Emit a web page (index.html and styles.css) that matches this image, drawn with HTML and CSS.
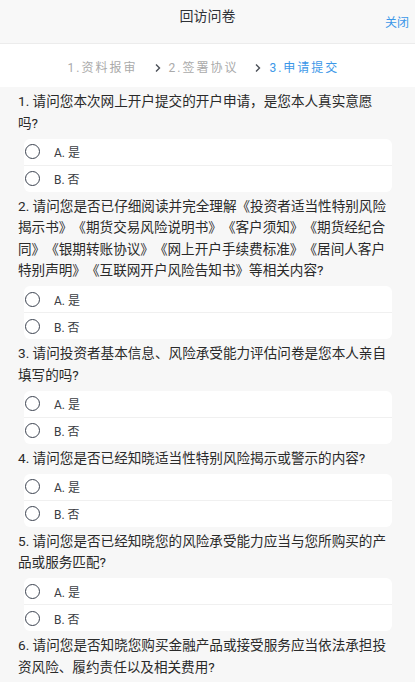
FILE: index.html
```html
<!DOCTYPE html>
<html lang="zh-CN">
<head>
<meta charset="utf-8">
<title>回访问卷</title>
<link rel="stylesheet" href="styles.css">
</head>
<body>
<header class="topbar">
  <h1 class="title">回访问卷</h1>
  <span class="close">关闭</span>
</header>
<nav class="steps">
  <span class="step">1.资料报审</span>
  <svg class="chev" width="6" height="10" viewBox="0 0 6 10"><polyline points="1,1.5 4.5,5 1,8.5" fill="none" stroke="#4a4f57" stroke-width="1.4"/></svg>
  <span class="step">2.签署协议</span>
  <svg class="chev" width="6" height="10" viewBox="0 0 6 10"><polyline points="1,1.5 4.5,5 1,8.5" fill="none" stroke="#4a4f57" stroke-width="1.4"/></svg>
  <span class="step active">3.申请提交</span>
</nav>
<main class="list">
  <section class="q">
    <p class="q-text">1. 请问您本次网上开户提交的开户申请，是您本人真实意愿吗?</p>
    <div class="opts">
      <label class="opt"><span class="radio"></span><span>A. 是</span></label>
      <label class="opt"><span class="radio"></span><span>B. 否</span></label>
    </div>
  </section>
  <section class="q">
    <p class="q-text">2. 请问您是否已仔细阅读并完全理解《投资者适当性特别风险揭示书》《期货交易风险说明书》《客户须知》《期货经纪合同》《银期转账协议》《网上开户手续费标准》《居间人客户特别声明》《互联网开户风险告知书》等相关内容?</p>
    <div class="opts">
      <label class="opt"><span class="radio"></span><span>A. 是</span></label>
      <label class="opt"><span class="radio"></span><span>B. 否</span></label>
    </div>
  </section>
  <section class="q">
    <p class="q-text">3. 请问投资者基本信息、风险承受能力评估问卷是您本人亲自填写的吗?</p>
    <div class="opts">
      <label class="opt"><span class="radio"></span><span>A. 是</span></label>
      <label class="opt"><span class="radio"></span><span>B. 否</span></label>
    </div>
  </section>
  <section class="q">
    <p class="q-text">4. 请问您是否已经知晓适当性特别风险揭示或警示的内容?</p>
    <div class="opts">
      <label class="opt"><span class="radio"></span><span>A. 是</span></label>
      <label class="opt"><span class="radio"></span><span>B. 否</span></label>
    </div>
  </section>
  <section class="q">
    <p class="q-text">5. 请问您是否已经知晓您的风险承受能力应当与您所购买的产品或服务匹配?</p>
    <div class="opts">
      <label class="opt"><span class="radio"></span><span>A. 是</span></label>
      <label class="opt"><span class="radio"></span><span>B. 否</span></label>
    </div>
  </section>
  <section class="q">
    <p class="q-text">6. 请问您是否知晓您购买金融产品或接受服务应当依法承担投资风险、履约责任以及相关费用?</p>
    <div class="opts">
      <label class="opt"><span class="radio"></span><span>A. 是</span></label>
      <label class="opt"><span class="radio"></span><span>B. 否</span></label>
    </div>
  </section>
</main>
</body>
</html>
```
FILE: styles.css
```css
* { box-sizing: border-box; }
html, body { margin: 0; padding: 0; }
body {
  background: #f7f7f7;
  font-family: Roboto, "Noto Sans CJK SC", sans-serif;
  color: #333;
  text-spacing-trim: space-all;
}
.topbar {
  position: relative;
  height: 44px;
  background: #f8f8f8;
  border-bottom: 1px solid #ececec;
}
.title {
  margin: 0;
  padding-top: 6px;
  text-align: center;
  font-size: 14px;
  font-weight: normal;
  line-height: 20px;
  color: #2f3237;
}
.close {
  position: absolute;
  right: 6px;
  top: 14px;
  font-size: 12px;
  line-height: 18px;
  color: #3b97e8;
}
.steps {
  height: 43px;
  background: #fff;
  display: flex;
  align-items: center;
  justify-content: center;
  padding-right: 8px;
}
.step {
  font-size: 12px;
  letter-spacing: 2px;
  color: #aaa;
  line-height: 16px;
  padding-top: 4px;
}
.step.active { color: #3b97e8; }
.chev {
  margin: 4px 8px 0 17px;
}
.list { padding-bottom: 20px; }
.q { padding: 0; }
.q-text {
  margin: 0;
  padding: 4px 24px 4.6px 18px;
  font-size: 13.6px;
  line-height: 21.5px;
  color: #2a2a2a;
  text-spacing-trim: space-all;
}
.opts {
  margin: 0 23px 0 24px;
  background: #fff;
  border-radius: 6px;
}
.opt {
  display: flex;
  align-items: center;
  height: 26px;
  padding-left: 1px;
  font-size: 12px;
  color: #3a3d42;
}
.opt + .opt {
  border-top: 1px solid #f0f0f0;
  height: 27px;
}
.radio {
  width: 15px;
  height: 15px;
  border: 1.5px solid #3c4350;
  border-radius: 50%;
  margin-right: 14px;
  flex: none;
}
```
